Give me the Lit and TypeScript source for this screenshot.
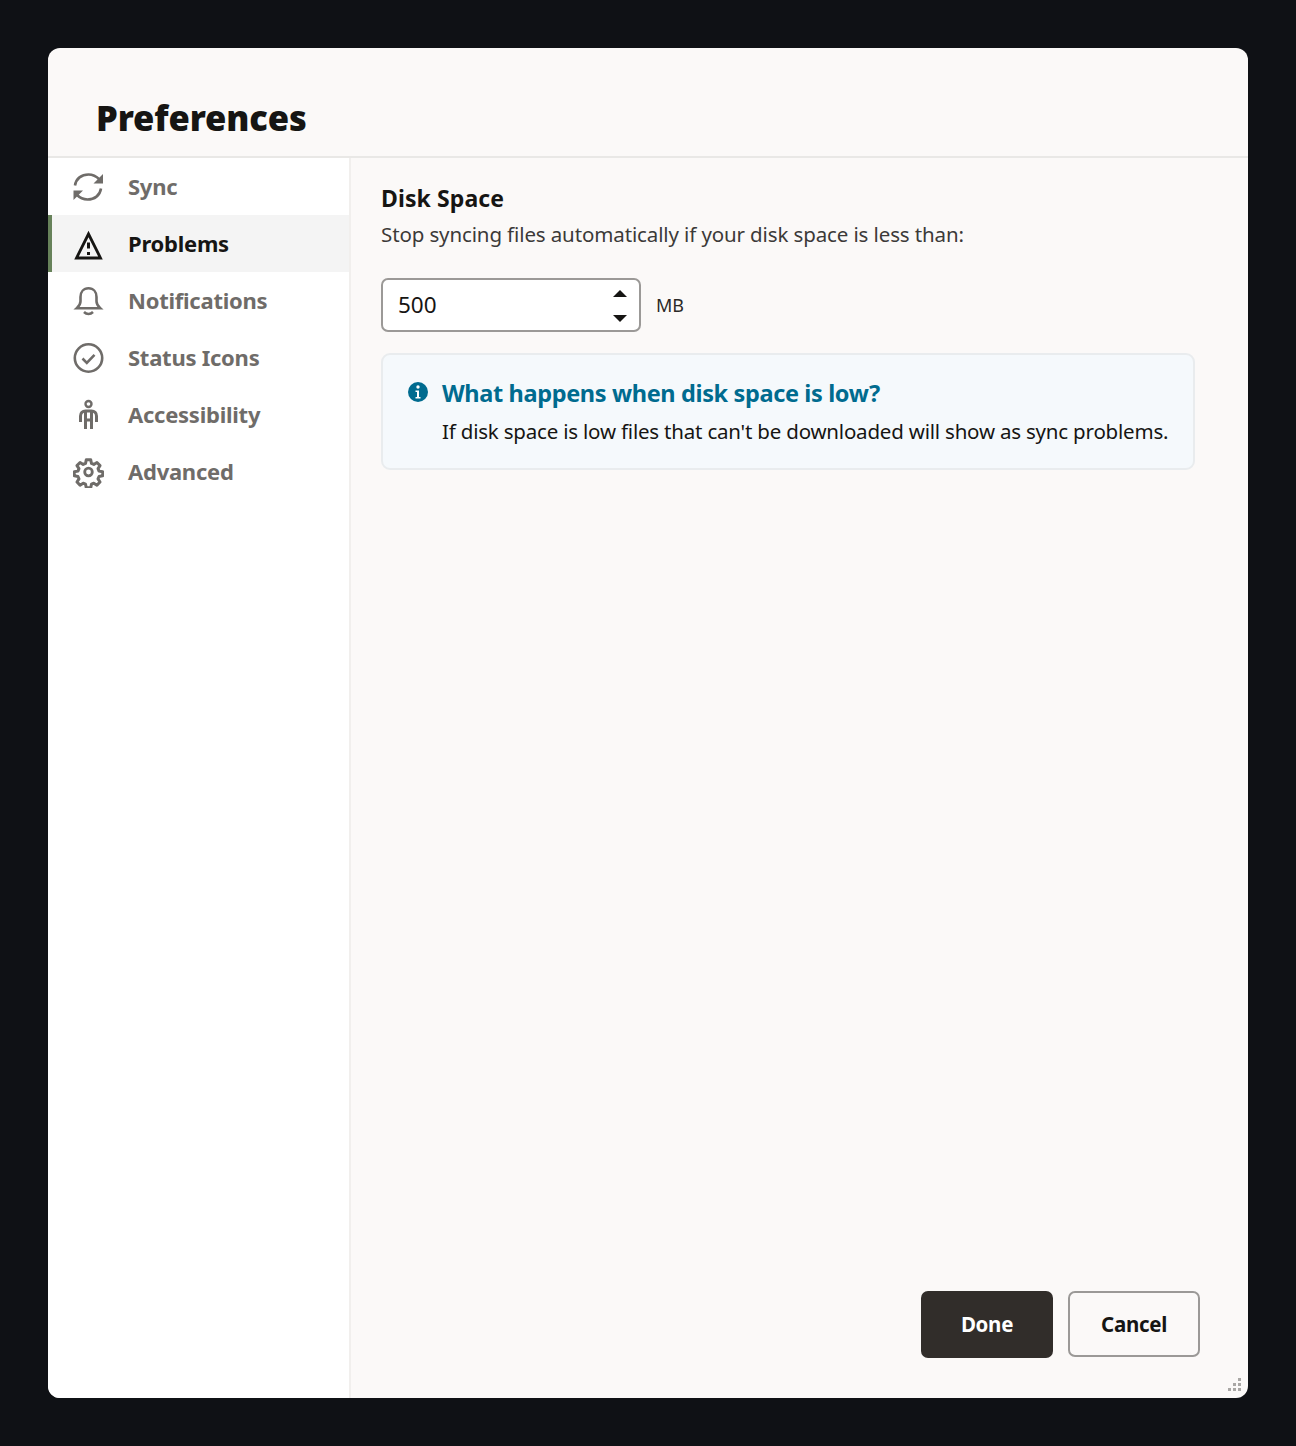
import { LitElement, html, css, svg } from "lit";
import { customElement } from "lit/decorators.js";

const icons: Record<string, unknown> = {
  sync: svg`<path d="M2 14.5C3 7.5 8.500 3.500 15.500 3.500c4.500 0 8 2 11 5" fill="none" stroke="currentColor" stroke-width="2.600"/><path d="M28 17.500C27 24.500 21.500 28.500 14.500 28.500c-4.500 0-8-2-11-5" fill="none" stroke="currentColor" stroke-width="2.600"/><path d="M30 3v9.500H20.500z" fill="currentColor"/><path d="M.5 29v-9.500H10z" fill="currentColor"/>`,
  warn: svg`<path d="M15.500 6 3.500 30h24z" fill="none" stroke="currentColor" stroke-width="2.800"/><rect x="14" y="14.500" width="3" height="6" fill="currentColor"/><rect x="14" y="24" width="3" height="3" fill="currentColor"/>`,
  bell: svg`<path d="M3.800 23.300c2.200-2 3.700-4 3.700-7V12c0-5 3-8.700 8-8.700s8 3.700 8 8.700v4.300c0 3 1.500 5 3.700 7z" fill="none" stroke="currentColor" stroke-width="2.600"/><path d="M11 27c1.500 1.500 3 2 4.500 2s3-.5 4.500-2" fill="none" stroke="currentColor" stroke-width="2.500"/>`,
  check: svg`<circle cx="15.500" cy="16" r="13.700" fill="none" stroke="currentColor" stroke-width="2.600"/><path d="M9.500 16.500l4.300 4.300 7.700-8" fill="none" stroke="currentColor" stroke-width="2.600"/>`,
  person: svg`<circle cx="15.500" cy="5" r="3" fill="none" stroke="currentColor" stroke-width="2.400"/><path d="M7.500 23v-6c0-3 2-5 5-5h6c3 0 5 2 5 5v6" fill="none" stroke="currentColor" stroke-width="3"/><path d="M12.500 13v17M18.500 13v17M12.500 21h6" fill="none" stroke="currentColor" stroke-width="3"/>`,
  gear: svg`<path d="M12.500 2.500h5l.8 4 2.600 1.100 3.500-2.200 3.400 3.500-2.200 3.400 1.100 2.700 4 .8v4.400l-4 .8-1.100 2.700 2.200 3.400-3.400 3.500-3.500-2.200-2.600 1.100-.8 4h-5l-.8-4-2.600-1.100-3.500 2.200-3.400-3.500 2.200-3.400-1.100-2.700-4-.8v-4.400l4-.8 1.100-2.700-2.200-3.400 3.400-3.500 3.500 2.200 2.600-1.100z" transform="translate(2 1.600) scale(.9)" fill="none" stroke="currentColor" stroke-width="3.300" stroke-linejoin="round"/><circle cx="15.500" cy="16" r="3.800" fill="none" stroke="currentColor" stroke-width="2.800"/>`,
};

const items = [
  ["sync", "Sync"],
  ["warn", "Problems"],
  ["bell", "Notifications"],
  ["check", "Status Icons"],
  ["person", "Accessibility"],
  ["gear", "Advanced"],
];

@customElement("app-root")
export class AppRoot extends LitElement {
  static styles = css`
    :host {
      display: block;
      height: 1446px;
      box-sizing: border-box;
      padding: 48px;
      background: #0f1115;
      font-family: "Noto Sans", "Open Sans", sans-serif;
      color: #161513;
    }
    .dialog {
      position: relative;
      height: 1350px;
      border-radius: 12px;
      overflow: hidden;
      background: #fbf9f8;
      display: flex;
      flex-direction: column;
    }
    .head {
      flex: none;
      box-sizing: border-box;
      padding: 48px 0 0 48px;
      border-bottom: 2px solid #e9e8e6;
      height: 110px;
    }
    h1 {
      margin: 0;
      font-size: 34.5px;
      line-height: 44px;
      font-weight: 900;
      letter-spacing: -0.1px;
      color: #161513;
    }
    .body {
      flex: 1;
      display: flex;
      min-height: 0;
    }
    nav {
      width: 303px;
      flex: none;
      box-sizing: border-box;
      background: #fff;
      border-right: 2px solid #f1efed;
    }
    .item {
      height: 57px;
      display: flex;
      align-items: center;
      gap: 24px;
      padding-left: 25px;
      color: #6f6c69;
      font-size: 22px;
      font-weight: 700;
      letter-spacing: -0.25px;
    }
    .item span {
      padding-bottom: 2px;
    }
    .item svg {
      width: 31px;
      height: 32px;
      flex: none;
    }
    .item.active {
      background: #f4f4f4;
      color: #161513;
      padding-left: 21px;
      border-left: 4px solid #67825a;
    }
    main {
      flex: 1;
      display: flex;
      flex-direction: column;
      padding: 23px 48px 40px 30px;
      min-width: 0;
    }
    h2 {
      margin: 0;
      font-size: 23px;
      line-height: 34px;
      font-weight: 700;
      letter-spacing: 0.1px;
    }
    .desc {
      margin: 2px 0 0;
      font-size: 20.5px;
      line-height: 34px;
      color: #3c3a38;
      letter-spacing: -0.12px;
    }
    .field {
      margin-top: 27px;
      display: flex;
      align-items: center;
      gap: 15px;
    }
    .input {
      width: 260px;
      height: 54px;
      box-sizing: border-box;
      border: 2px solid #9b9997;
      border-radius: 7px;
      background: #fff;
      display: flex;
      align-items: center;
      justify-content: space-between;
      padding: 0 12px 0 15px;
      font-size: 22.5px;
    }
    .value {
      padding-bottom: 2px;
    }
    .spin {
      display: flex;
      flex-direction: column;
      gap: 18px;
      padding-top: 2px;
    }
    .up,
    .down {
      width: 0;
      height: 0;
      border-left: 7.5px solid transparent;
      border-right: 7.5px solid transparent;
    }
    .up {
      border-bottom: 7px solid #161513;
    }
    .down {
      border-top: 7px solid #161513;
    }
    .unit {
      font-size: 18px;
      color: #2b2927;
      letter-spacing: -0.2px;
    }
    .notice {
      margin-top: 21px;
      width: 814px;
      height: 117px;
      box-sizing: border-box;
      border: 2px solid #e9ecee;
      border-radius: 9px;
      background: #f5f9fc;
      padding: 19px 0 0 24px;
      display: flex;
      gap: 13px;
    }
    .notice svg {
      width: 22px;
      height: 22px;
      flex: none;
      margin-top: 7px;
      color: #006b8f;
    }
    .notice h3 {
      margin: 0;
      font-size: 23.5px;
      line-height: 38px;
      font-weight: 700;
      color: #006b8f;
      letter-spacing: -0.36px;
    }
    .notice p {
      margin: 2px 0 0;
      font-size: 20.5px;
      line-height: 34px;
      letter-spacing: -0.2px;
      white-space: nowrap;
    }
    .foot {
      margin-top: auto;
      display: flex;
      align-items: flex-start;
      justify-content: flex-end;
      gap: 15px;
    }
    button {
      width: 132px;
      height: 67px;
      box-sizing: border-box;
      border-radius: 7px;
      font: 700 20.5px "Noto Sans", sans-serif;
      letter-spacing: -0.3px;
    }
    .done {
      background: #312d2a;
      color: #fff;
      border: 0;
      padding-bottom: 2px;
    }
    .cancel {
      height: 66px;
      background: #fbf9f8;
      color: #161513;
      border: 2px solid #9b9997;
    }
    .grip {
      position: absolute;
      right: 6px;
      bottom: 6px;
      width: 14px;
      height: 14px;
    }
  `;

  render() {
    return html`
      <div class="dialog">
        <div class="head"><h1>Preferences</h1></div>
        <div class="body">
          <nav>
            ${items.map(
              ([icon, label]) => html`
                <div class="item ${label === "Problems" ? "active" : ""}">
                  <svg viewBox="0 0 31 32">${icons[icon]}</svg>
                  <span>${label}</span>
                </div>
              `
            )}
          </nav>
          <main>
            <h2>Disk Space</h2>
            <p class="desc">Stop syncing files automatically if your disk space is less than:</p>
            <div class="field">
              <div class="input">
                <span class="value">500</span>
                <span class="spin"><span class="up"></span><span class="down"></span></span>
              </div>
              <span class="unit">MB</span>
            </div>
            <div class="notice">
              <svg viewBox="0 0 22 22">
                <circle cx="11" cy="11" r="10" fill="currentColor"></circle>
                <circle cx="11" cy="6" r="1.7" fill="#fff"></circle>
                <path d="M8.500 9.500h3.500v6.500h1.500v1.500h-5V16h1.500v-5H8.500z" fill="#fff"></path>
              </svg>
              <div>
                <h3>What happens when disk space is low?</h3>
                <p>If disk space is low files that can't be downloaded will show as sync problems.</p>
              </div>
            </div>
            <div class="foot">
              <button class="done">Done</button>
              <button class="cancel">Cancel</button>
            </div>
          </main>
        </div>
        <svg class="grip" viewBox="0 0 14 14" fill="#a9a7a5">
          <rect x="10" y="0" width="3" height="3"></rect>
          <rect x="5" y="5" width="3" height="3"></rect>
          <rect x="10" y="5" width="3" height="3"></rect>
          <rect x="0" y="10" width="3" height="3"></rect>
          <rect x="5" y="10" width="3" height="3"></rect>
          <rect x="10" y="10" width="3" height="3"></rect>
        </svg>
      </div>
    `;
  }
}
